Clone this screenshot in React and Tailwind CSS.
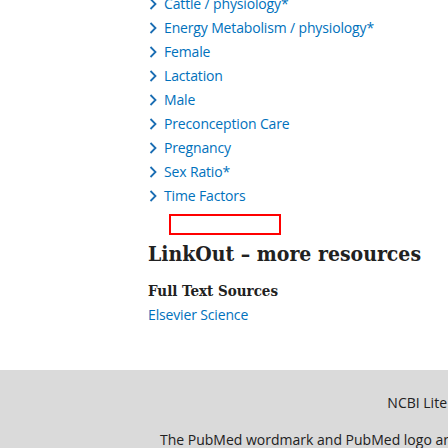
import React from "react";

const items = [
  "Cattle / physiology*",
  "Energy Metabolism / physiology*",
  "Female",
  "Lactation",
  "Male",
  "Preconception Care",
  "Pregnancy",
  "Sex Ratio*",
  "Time Factors",
];

function Chevron() {
  return (
    <svg width="8" height="12" viewBox="0 0 8 12" className="shrink-0">
      <polyline points="1.5,1 6.5,6 1.5,11" fill="none" stroke="#1a6db3" strokeWidth="1.8" />
    </svg>
  );
}

export default function App() {
  return (
    <div className="w-[448px] h-[448px] overflow-hidden bg-white">
      <div className="pl-[148px] font-['Open_Sans',sans-serif]">
        <ul className="-mt-[8px]">
          {items.map((t) => (
            <li key={t} className="flex items-center h-[24px] text-[14px] tracking-[-0.15px] leading-[24px] text-[#0071bc]">
              <span className="w-[16px] pl-[1px] flex items-center"><Chevron /></span>
              <span className="whitespace-nowrap">{t}</span>
            </li>
          ))}
        </ul>
        <div className="ml-[21px] mt-[6px] w-[112px] h-[21px] border-2 border-[#ff0000]" />
        <h2 className="mt-[4px] font-['DejaVu_Serif_Condensed','DejaVu_Serif',serif] font-stretch-condensed font-bold text-[21px] leading-[30px] text-[#212121] whitespace-nowrap">
          LinkOut – more resources
        </h2>
        <h3 className="mt-[10px] font-['DejaVu_Serif_Condensed','DejaVu_Serif',serif] font-stretch-condensed font-bold text-[15px] leading-[24px] text-[#212121]">
          Full Text Sources
        </h3>
        <div className="text-[14px] tracking-[-0.15px] leading-[24px] text-[#0071bc]">Elsevier Science</div>
      </div>
      <div className="mt-[43px] bg-[#dadada] h-[80px] font-['Open_Sans',sans-serif] text-[14px] text-[#212121]">
        <div className="flex justify-end pt-[21px] pr-[1px] leading-[24px]">NCBI Lite</div>
        <div className="pl-[160px] pt-[13px] whitespace-nowrap leading-[24px] text-[14px]">
          The PubMed wordmark and PubMed logo are registered trademarks
        </div>
      </div>
    </div>
  );
}
